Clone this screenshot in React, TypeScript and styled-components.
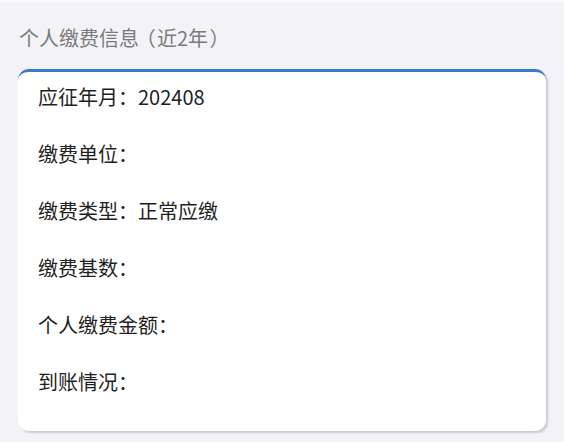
import React from 'react';
import styled, { createGlobalStyle } from 'styled-components';

const GlobalStyle = createGlobalStyle`
  html, body {
    margin: 0;
    padding: 0;
    background: #f3f3f7;
  }
  body {
    font-family: "Noto Sans CJK SC", "Noto Sans", sans-serif;
  }
`;

const Page = styled.div`
  width: 564px;
  height: 442px;
  overflow: hidden;
  background: #f3f3f7;
  border-top: 3px solid #f8f8fa;
  box-sizing: border-box;
`;

const SectionTitle = styled.div`
  padding: 21px 0 0 19px;
  height: 28px;
  line-height: 28px;
  font-size: 20px;
  color: #7a7a7e;
  margin-bottom: 17px;
  font-feature-settings: "palt";
`;

const Paren = styled.span<{ $open?: boolean }>`
  padding: ${(p) => (p.$open ? '0 2px 0 6px' : '0 6px 0 2px')};
`;

const Card = styled.div`
  margin: 0 18px;
  background: #ffffff;
  border-top: 3px solid #3a79d2;
  border-radius: 11px;
  box-shadow: 2px 2px 2px rgba(0, 0, 0, 0.16);
  padding: 11px 20px 35px;
  display: flex;
  flex-direction: column;
  gap: 29px;
`;

const Row = styled.div`
  height: 28px;
  line-height: 28px;
  font-size: 20px;
  color: #1f1f1f;
  white-space: nowrap;
`;

const rows: { label: string; value?: string }[] = [
  { label: '应征年月', value: '202408' },
  { label: '缴费单位' },
  { label: '缴费类型', value: '正常应缴' },
  { label: '缴费基数' },
  { label: '个人缴费金额' },
  { label: '到账情况' },
];

export default function App() {
  return (
    <Page>
      <GlobalStyle />
      <SectionTitle>
        个人缴费信息<Paren $open>（</Paren>近2年<Paren>）</Paren>
      </SectionTitle>
      <Card>
        {rows.map((r) => (
          <Row key={r.label}>
            {r.label}：{r.value ?? ''}
          </Row>
        ))}
      </Card>
    </Page>
  );
}
